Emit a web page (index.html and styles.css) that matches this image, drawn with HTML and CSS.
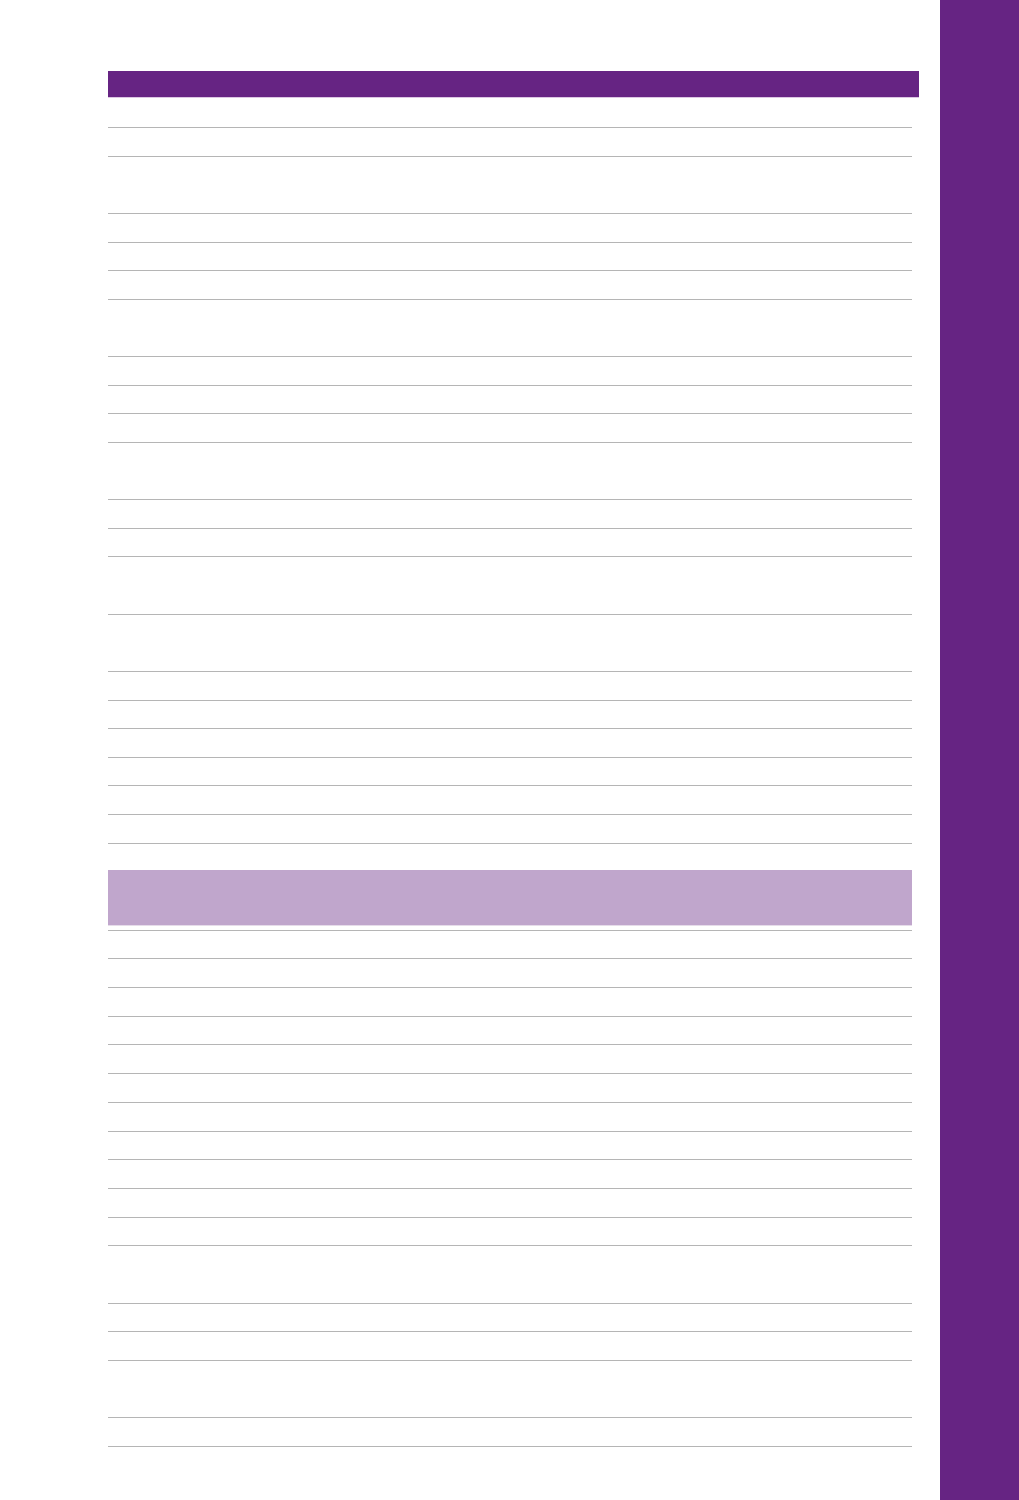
FILE: index.html
```html
<!DOCTYPE html>
<html lang="en">
<head>
<meta charset="utf-8">
<title>Table</title>
<link rel="stylesheet" href="styles.css">
</head>
<body>
<div class="page">
  <main class="main">
    <div class="head-bar"></div>
    <div class="table">
      <div class="row first"></div>
      <div class="row s"></div>
      <div class="row d"></div>
      <div class="row s"></div>
      <div class="row s"></div>
      <div class="row s"></div>
      <div class="row d"></div>
      <div class="row s"></div>
      <div class="row s"></div>
      <div class="row s"></div>
      <div class="row d"></div>
      <div class="row s"></div>
      <div class="row s"></div>
      <div class="row d"></div>
      <div class="row d"></div>
      <div class="row s"></div>
      <div class="row s"></div>
      <div class="row s"></div>
      <div class="row s"></div>
      <div class="row s"></div>
      <div class="row s"></div>
    </div>
    <div class="band"></div>
    <div class="table second">
      <div class="row s"></div>
      <div class="row s"></div>
      <div class="row s"></div>
      <div class="row s"></div>
      <div class="row s"></div>
      <div class="row s"></div>
      <div class="row s"></div>
      <div class="row s"></div>
      <div class="row s"></div>
      <div class="row s"></div>
      <div class="row s"></div>
      <div class="row d"></div>
      <div class="row s"></div>
      <div class="row s"></div>
      <div class="row d"></div>
      <div class="row s"></div>
    </div>
  </main>
  <aside class="sidebar"></aside>
</div>
</body>
</html>
```

FILE: styles.css
```css
* { box-sizing: border-box; }
html, body {
  margin: 0;
  padding: 0;
  background: #ffffff;
  font-family: "Liberation Sans", Arial, sans-serif;
}
.page {
  --u: 28.64px;
  display: flex;
  width: 1019px;
  min-height: 1500px;
}
.main {
  width: 940px;
  padding: 71px 0 0 108px;
}
.head-bar {
  width: 811px;
  height: 27px;
  background: #662483;
  border-bottom: 1px solid #dcc6e3;
}
.table {
  width: 804px;
}
.row {
  border-bottom: 1px solid #b5b5b5;
}
.row.first { height: 30px; }
.row.s { height: var(--u); }
.row.d { height: calc(var(--u) * 2); }
.band {
  width: 804px;
  height: 56px;
  margin-top: 26px;
  background: #c0a6cc;
  border-bottom: 1px solid #e6dcea;
}
.table.second {
  --u: 28.7px;
  margin-top: 4px;
  border-top: 1px solid #b5b5b5;
}
.sidebar {
  width: 79px;
  min-height: 1500px;
  background: #662483;
}
```
